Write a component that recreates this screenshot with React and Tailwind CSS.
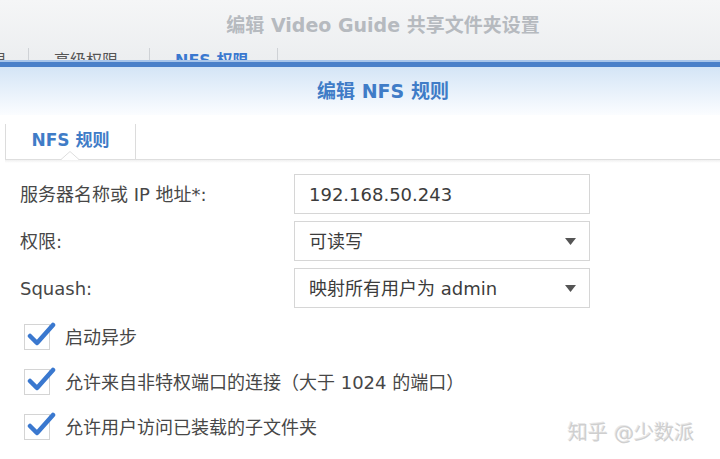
import React from "react";

const FONT = { fontFamily: '"DejaVu Sans", "Noto Sans CJK SC", sans-serif' };

function Arrow() {
  return (
    <svg width="11" height="7" viewBox="0 0 11 7" className="shrink-0">
      <path d="M0 0 H11 L5.5 7 Z" fill="#555" />
    </svg>
  );
}

function Check() {
  return (
    <div className="relative w-[26px] h-[26px] shrink-0 border border-[#d4d4d4] bg-white">
      <svg
        width="30"
        height="26"
        viewBox="0 0 30 26"
        className="absolute left-[2px] top-[-3px]"
      >
        <path
          d="M3 14 L10 21 L26 3"
          fill="none"
          stroke="#3a78cf"
          strokeWidth="4.5"
          strokeLinecap="round"
          strokeLinejoin="round"
        />
      </svg>
    </div>
  );
}

function Field({ label, children }) {
  return (
    <div className="flex items-center h-[40px]">
      <div className="w-[294px] pl-[20px] text-[18px] text-[#474747]">{label}</div>
      <div className="w-[296px] h-[40px] border border-[#d6d6d6] bg-white flex items-center pl-[14px] pr-[13px] text-[18px] text-[#3c3c3c]">
        {children}
      </div>
    </div>
  );
}

function CheckRow({ text }) {
  return (
    <div className="flex items-center h-[26px] pl-[24px] gap-[15px]">
      <Check />
      <span className="text-[18px] text-[#474747]">{text}</span>
    </div>
  );
}

export default function App() {
  return (
    <div
      className="relative w-[720px] h-[459px] overflow-hidden bg-white"
      style={FONT}
    >
      {/* background window header */}
      <div className="h-[60px] bg-gradient-to-b from-[#f5f6f7] to-[#eceef0] flex flex-col">
        <div className="h-[48px] flex items-center justify-center pt-[2px] pl-[46px] text-[19px] font-bold text-[#b6babf]">
          编辑 Video Guide 共享文件夹设置
        </div>
        <div className="h-[12px] overflow-hidden flex text-[16px] leading-[16px]">
          <div className="w-[29px] border-r border-[#cfd2d6] overflow-hidden">
            <div className="pt-[5px] text-[#555] -ml-[10px]">限</div>
          </div>
          <div className="w-[121px] border-r border-[#cfd2d6] pl-[25px] pt-[5px] text-[#555]">
            高级权限
          </div>
          <div className="w-[128px] border-r border-[#cfd2d6] pl-[25px] pt-[5px] text-[#3a78cf] font-bold">
            NFS 权限
          </div>
        </div>
      </div>
      <div className="h-[2px] bg-[#a8c5ea]" />
      <div className="h-[5px] bg-[#4a80c9]" />

      {/* dialog header */}
      <div className="h-[48px] bg-gradient-to-b from-[#d4e5f6] to-[#fbfdff] flex items-center justify-center text-[19px] font-bold text-[#3f7cc7] pl-[46px]">
        编辑 NFS 规则
      </div>

      {/* tab bar */}
      <div className="relative h-[45px] flex items-end bg-white">
        <div className="ml-[5px] w-[131px] h-[36px] border-l border-r border-[#dcdcdc] flex items-center justify-center text-[17px] font-bold text-[#3f7cc7] pb-[2px]">
          NFS 规则
        </div>
        <div className="absolute left-[5px] right-0 bottom-[0px] h-[1px] bg-[#dedede]" />
        <svg
          width="18"
          height="9"
          viewBox="0 0 18 9"
          className="absolute left-[61px] bottom-[0px]"
        >
          <path d="M0 9 L9 0.5 L18 9 Z" fill="#fff" />
          <path d="M0 8.5 L9 0.5 L18 8.5" fill="none" stroke="#dedede" strokeWidth="1" />
        </svg>
      </div>
      <div className="h-[3px] bg-gradient-to-b from-[#f0f0f0] to-white ml-[5px]" />

      {/* form */}
      <div className="pt-[11px] flex flex-col gap-[7px]">
        <Field label="服务器名称或 IP 地址*:">192.168.50.243</Field>
        <Field label="权限:">
          <span className="flex-1">可读写</span>
          <Arrow />
        </Field>
        <Field label="Squash:">
          <span className="flex-1">映射所有用户为 admin</span>
          <Arrow />
        </Field>
      </div>

      <div className="pt-[16px] flex flex-col gap-[19px]">
        <CheckRow text="启动异步" />
        <CheckRow text="允许来自非特权端口的连接（大于 1024 的端口）" />
        <CheckRow text="允许用户访问已装载的子文件夹" />
      </div>

      <div
        className="absolute left-[568px] top-[418px] text-[20px] text-[#cfcfcf]"
        style={{ textShadow: "1px 1px 0 #ffffff, -1px -1px 0 #e8e8e8" }}
      >
        知乎 @少数派
      </div>
    </div>
  );
}
